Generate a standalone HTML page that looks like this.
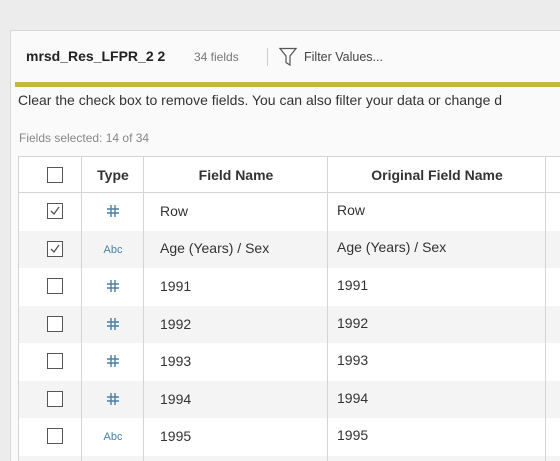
<!DOCTYPE html>
<html><head><style>
*{margin:0;padding:0;box-sizing:border-box}
html,body{width:560px;height:461px;overflow:hidden}
body{background:#ececec;font-family:"Liberation Sans",sans-serif;color:#333;position:relative}
.panel{position:absolute;left:10px;top:30px;width:550px;height:431px;background:#fafafa;border:1px solid #d9d9d9;border-right:none;border-bottom:none}
.abs{position:absolute;white-space:nowrap}
.bar{position:absolute;left:15px;top:82px;width:545px;height:5px;background:#c4b93b}
.tbl{position:absolute;left:18px;top:156px;width:542px;height:305px;overflow:hidden;border-top:1px solid #d4d4d4;border-left:1px solid #d4d4d4}
.row{position:relative;height:37.5px;background:#fff}
.row.g{background:#f4f4f4}
.hdr{height:36px;border-bottom:1px solid #d4d4d4;background:#fff}
.vl{position:absolute;top:156px;width:1px;height:305px;background:#d4d4d4}
.cb{position:absolute;left:28px;width:16px;height:16px;border:1px solid #555;background:#fff}
.cb svg{position:absolute;left:2px;top:2px}
.cell{position:absolute;font-size:14px;color:#333}
.ty{position:absolute;left:63px;width:62px;text-align:center;color:#4a7fa3}
.hs{position:absolute;left:88px}
.abc{font-size:11px}
</style></head><body>
<div class="panel"></div>
<div class="abs" style="left:26px;top:48px;font-size:14px;font-weight:bold;color:#222">mrsd_Res_LFPR_2 2</div>
<div class="abs" style="left:194px;top:50px;font-size:12px;color:#777">34 fields</div>
<div class="abs" style="left:267px;top:48px;width:1px;height:18px;background:#ccc"></div>
<svg class="abs" style="left:279px;top:47px" width="18" height="20" viewBox="0 0 18 20"><path d="M1 1.5H17L11 9V18L7 15.5V9Z" fill="none" stroke="#555" stroke-width="1.2"/></svg>
<div class="abs" style="left:304px;top:50px;font-size:12.5px;color:#444">Filter Values...</div>
<div class="bar"></div>
<div class="abs" style="left:18px;top:92px;font-size:14px;color:#333">Clear the check box to remove fields. You can also filter your data or change d</div>
<div class="abs" style="left:19px;top:131px;font-size:12px;color:#888">Fields selected: 14 of 34</div>
<div class="tbl">
<div class="row hdr"><div class="cb" style="top:10px"></div>
<div class="cell" style="left:63px;width:62px;text-align:center;top:10px;font-weight:bold">Type</div>
<div class="cell" style="left:125px;width:184px;text-align:center;top:10px;font-weight:bold">Field Name</div>
<div class="cell" style="left:309px;width:218px;text-align:center;top:10px;font-weight:bold">Original Field Name</div></div>
<div class="row"><div class="cb" style="top:10px"><svg width="10" height="10"><path d="M1 5L4 8L9 1" fill="none" stroke="#555" stroke-width="1.3"/></svg></div><svg class="hs" style="top:12px" width="12" height="12"><path d="M4 0V12M8 0V12M0 4H12M0 8H12" stroke="#4a7fa3" stroke-width="1.4"/></svg><div class="cell" style="left:141px;top:10px">Row</div><div class="cell" style="left:318px;top:9px">Row</div></div>
<div class="row g"><div class="cb" style="top:10px"><svg width="10" height="10"><path d="M1 5L4 8L9 1" fill="none" stroke="#555" stroke-width="1.3"/></svg></div><div class="ty abc" style="top:13px">Abc</div><div class="cell" style="left:141px;top:9px">Age (Years) / Sex</div><div class="cell" style="left:318px;top:8px">Age (Years) / Sex</div></div>
<div class="row"><div class="cb" style="top:10px"></div><svg class="hs" style="top:12px" width="12" height="12"><path d="M4 0V12M8 0V12M0 4H12M0 8H12" stroke="#4a7fa3" stroke-width="1.4"/></svg><div class="cell" style="left:141px;top:10px">1991</div><div class="cell" style="left:318px;top:9px">1991</div></div>
<div class="row g"><div class="cb" style="top:10px"></div><svg class="hs" style="top:12px" width="12" height="12"><path d="M4 0V12M8 0V12M0 4H12M0 8H12" stroke="#4a7fa3" stroke-width="1.4"/></svg><div class="cell" style="left:141px;top:10px">1992</div><div class="cell" style="left:318px;top:9px">1992</div></div>
<div class="row"><div class="cb" style="top:10px"></div><svg class="hs" style="top:12px" width="12" height="12"><path d="M4 0V12M8 0V12M0 4H12M0 8H12" stroke="#4a7fa3" stroke-width="1.4"/></svg><div class="cell" style="left:141px;top:10px">1993</div><div class="cell" style="left:318px;top:9px">1993</div></div>
<div class="row g"><div class="cb" style="top:10px"></div><svg class="hs" style="top:12px" width="12" height="12"><path d="M4 0V12M8 0V12M0 4H12M0 8H12" stroke="#4a7fa3" stroke-width="1.4"/></svg><div class="cell" style="left:141px;top:10px">1994</div><div class="cell" style="left:318px;top:9px">1994</div></div>
<div class="row"><div class="cb" style="top:10px"></div><div class="ty abc" style="top:13px">Abc</div><div class="cell" style="left:141px;top:10px">1995</div><div class="cell" style="left:318px;top:9px">1995</div></div>
<div class="row g"></div>
</div>
<div class="vl" style="left:81px"></div>
<div class="vl" style="left:143px"></div>
<div class="vl" style="left:327px"></div>
<div class="vl" style="left:545px"></div>
</body></html>
